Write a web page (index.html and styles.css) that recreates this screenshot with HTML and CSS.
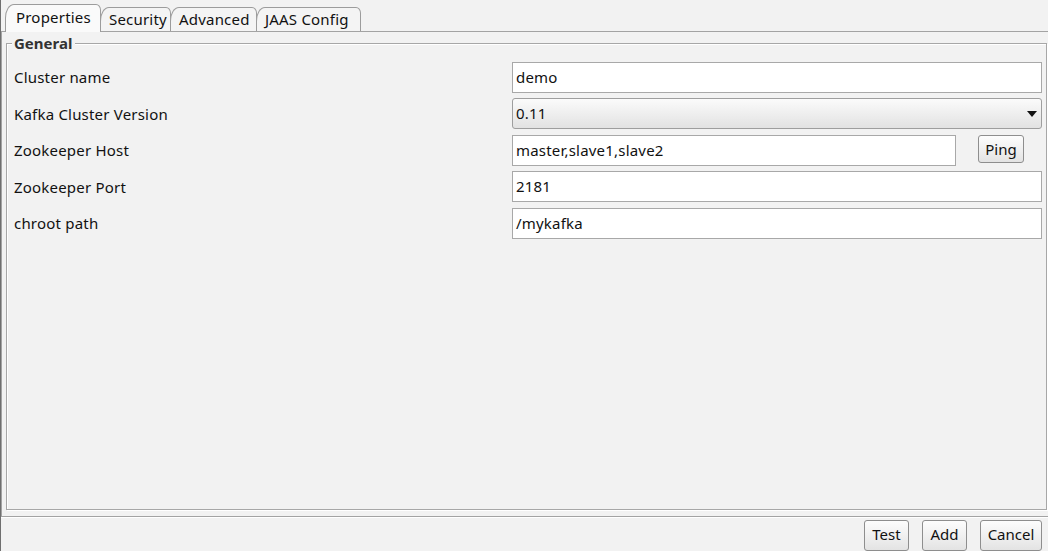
FILE: index.html
```html
<!DOCTYPE html>
<html>
<head>
<meta charset="utf-8">
<link rel="stylesheet" href="styles.css">
</head>
<body>
<div class="window">
  <div class="tabs">
    <div class="tab selected">Properties</div>
    <div class="tab">Security</div>
    <div class="tab">Advanced</div>
    <div class="tab">JAAS Config</div>
  </div>
  <div class="pane">
    <div class="group">
      <div class="legend">General</div>
      <div class="form">
        <div class="label">Cluster name</div>
        <div class="field"><div class="input">demo</div></div>
        <div class="label">Kafka Cluster Version</div>
        <div class="field"><div class="combo"><span>0.11</span><span class="arrow"></span></div></div>
        <div class="label">Zookeeper Host</div>
        <div class="field host"><div class="input grow">master,slave1,slave2</div><div class="btn ping">Ping</div></div>
        <div class="label">Zookeeper Port</div>
        <div class="field"><div class="input">2181</div></div>
        <div class="label">chroot path</div>
        <div class="field"><div class="input">/mykafka</div></div>
      </div>
    </div>
  </div>
  <div class="actions">
    <div class="btn test">Test</div>
    <div class="btn add">Add</div>
    <div class="btn cancel">Cancel</div>
  </div>
</div>
</body>
</html>
```
FILE: styles.css
```css
html, body {
  margin: 0;
  padding: 0;
}
body {
  background: #f2f2f2;
  font-family: "Noto Sans", "Open Sans", sans-serif;
  font-size: 15px;
  letter-spacing: 0.2px;
  color: #111111;
  width: 1048px;
  height: 551px;
  overflow: hidden;
}
.window {
  height: 551px;
  border-left: 1px solid #6f6f6f;
  display: flex;
  flex-direction: column;
  box-sizing: border-box;
}
.tabs {
  height: 31px;
  display: flex;
  align-items: flex-end;
  padding-left: 4px;
  box-sizing: border-box;
}
.tab {
  height: 24px;
  line-height: 22px;
  padding: 0 7px 0 8px;
  border: 1px solid #9c9c9c;
  border-bottom: none;
  border-radius: 9px 5px 0 0 / 14px 6px 0 0;
  background: #f4f4f4;
  box-sizing: border-box;
  margin-right: -1px;
  position: relative;
  white-space: nowrap;
}
.tab.selected {
  line-height: 25px;
  background: #fafafa;
  width: 96px;
  padding-left: 10px;
  z-index: 1;
  margin-bottom: -1px;
  height: 28px;
}
.tab:nth-child(2) { width: 71px; }
.tab:nth-child(3) { width: 87px; }
.tab:nth-child(4) { width: 105px; }
.pane {
  height: 488px;
  border-top: 1px solid #a3a3a3;
  border-left: 1px solid #a3a3a3;
  border-bottom: 1px solid #a3a3a3;
  box-shadow: 0 1px 0 #ffffff;
  box-sizing: border-box;
  padding: 11px 1px 6px 4px;
  display: flex;
}
.group {
  flex: 1;
  border: 1px solid #a7a7a7;
  box-shadow: inset 1px 1px 0 #ffffff, 1px 1px 0 #ffffff;
  position: relative;
  padding: 18px 4px 0 7px;
}
.legend {
  position: absolute;
  top: -10px;
  left: 5px;
  padding: 0 3px 0 2px;
  background: #f2f2f2;
  font-weight: bold;
  line-height: 19px;
  color: #333;
  letter-spacing: 0;
}
.form {
  display: grid;
  grid-template-columns: 498px 1fr;
  grid-auto-rows: 31px;
  row-gap: 5.5px;
  align-items: center;
}
.label {
  line-height: 20px;
}
.field {
  height: 100%;
  display: flex;
  align-items: center;
}
.input {
  flex: 1;
  height: 100%;
  background: #ffffff;
  border: 1px solid #a8a8a8;
  box-sizing: border-box;
  padding: 0 3px;
  line-height: 28px;
  white-space: nowrap;
}
.host .input.grow {
  flex: 0 0 444px;
}
.combo {
  flex: 1;
  height: 100%;
  box-sizing: border-box;
  border: 1px solid #9e9e9e;
  border-radius: 3px;
  background: linear-gradient(#fbfbfb, #ececec 60%, #e2e2e2);
  padding: 0 4px 0 3px;
  line-height: 29px;
  display: flex;
  justify-content: space-between;
  align-items: center;
}
.arrow {
  width: 0;
  height: 0;
  border-left: 5px solid transparent;
  border-right: 5px solid transparent;
  border-top: 6px solid #111;
}
.btn {
  height: 28px;
  box-sizing: border-box;
  border: 1px solid #8e8e8e;
  border-radius: 3px;
  background: linear-gradient(#fdfdfd, #efefef 55%, #e3e3e3);
  text-align: center;
  line-height: 26px;
  letter-spacing: 0;
}
.ping {
  width: 46px;
  margin-left: 22px;
  margin-top: -2px;
}
.actions {
  flex: 1;
  display: flex;
  justify-content: flex-end;
  align-items: flex-start;
  padding-top: 3px;
  padding-right: 6px;
  column-gap: 13px;
}
.actions .btn {
  height: 31px;
}
.test { width: 45px; }
.add { width: 45px; }
.cancel { width: 62px; }
```
